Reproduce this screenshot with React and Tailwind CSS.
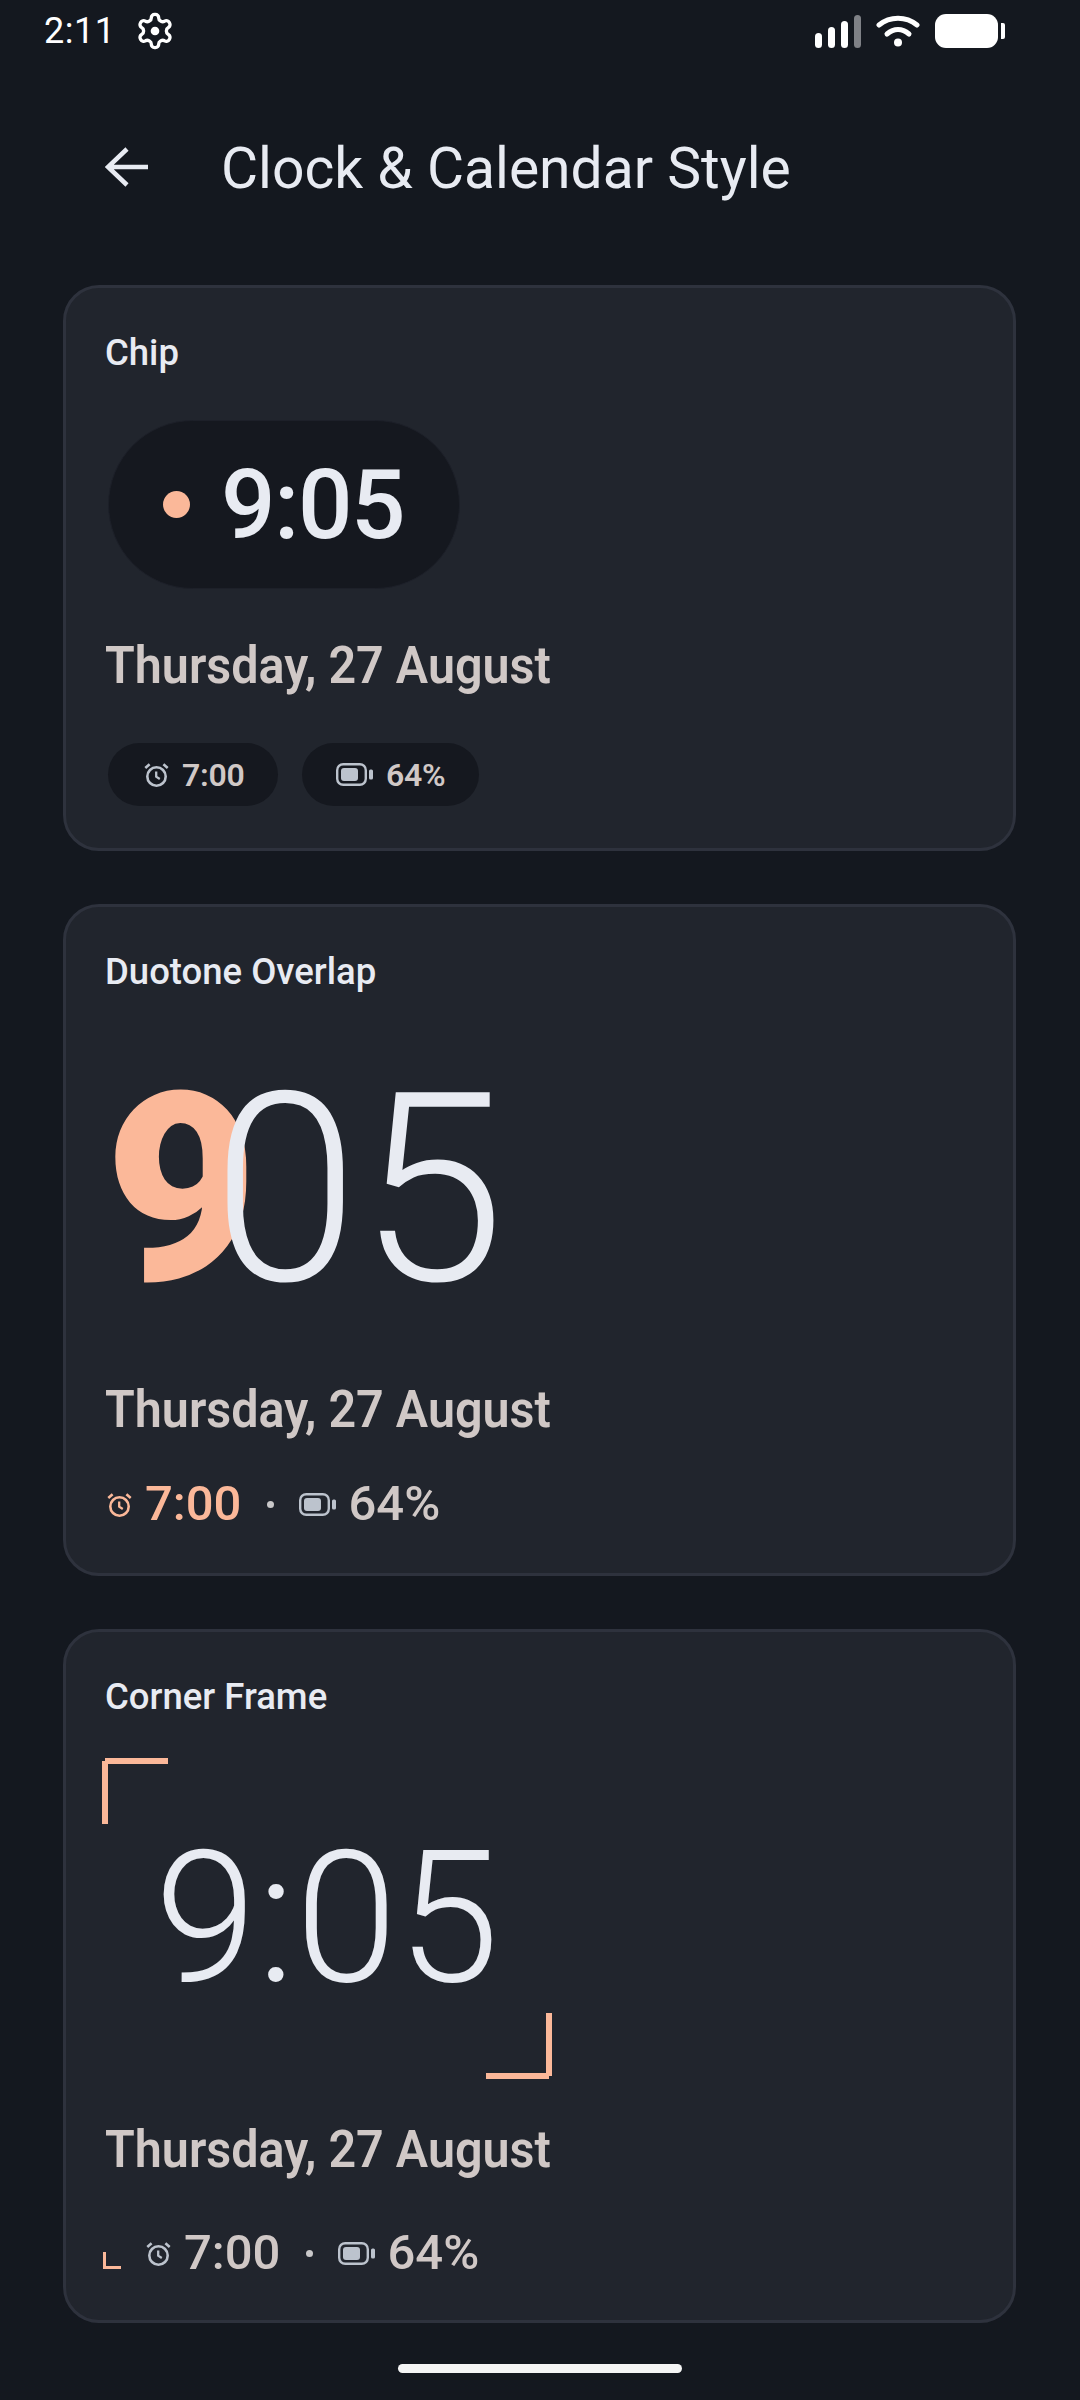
const AlarmIcon = ({ color = '#bcc3cd', className = '' }) => (
  <svg viewBox="0 0 25 25" width="25" height="25" fill="none" stroke={color} className={className}>
    <circle cx="12.5" cy="14.5" r="9.2" strokeWidth="2.6" />
    <path d="M12.2 9.5v5.2l3.6 2.2" strokeWidth="2.3" />
    <path d="M1.3 6 5.6 2.2M23.7 6 19.4 2.2" strokeWidth="2.6" />
  </svg>
);

const BatteryIcon = ({ className = '' }) => (
  <svg viewBox="0 0 37 23" width="37" height="23" className={`shrink-0 ${className}`}>
    <rect x="1.2" y="1.2" width="28.6" height="20.6" rx="6" fill="none" stroke="#bcc3cd" strokeWidth="2.4" />
    <rect x="5" y="5" width="17" height="13" rx="3" fill="#bcc3cd" />
    <rect x="33" y="6.5" width="4" height="10" rx="1.5" fill="#bcc3cd" />
  </svg>
);

const StatusBar = () => (
  <div className="h-[62px] pl-[44px] pr-[75px] flex items-center justify-between text-white">
    <div className="flex items-center">
      <span className="text-[36px] leading-[62px] tracking-[0.5px]">2:11</span>
      <svg viewBox="0 0 24 24" width="40" height="40" fill="none" stroke="white" strokeWidth="2" strokeLinejoin="round" className="ml-[20px]">
        <path d="M12.22 2h-.44a2 2 0 0 0-2 2v.18a2 2 0 0 1-1 1.73l-.43.25a2 2 0 0 1-2 0l-.15-.08a2 2 0 0 0-2.73.73l-.22.38a2 2 0 0 0 .73 2.73l.15.1a2 2 0 0 1 1 1.72v.51a2 2 0 0 1-1 1.74l-.15.09a2 2 0 0 0-.73 2.73l.22.38a2 2 0 0 0 2.73.73l.15-.08a2 2 0 0 1 2 0l.43.25a2 2 0 0 1 1 1.73V20a2 2 0 0 0 2 2h.44a2 2 0 0 0 2-2v-.18a2 2 0 0 1 1-1.73l.43-.25a2 2 0 0 1 2 0l.15.08a2 2 0 0 0 2.73-.73l.22-.39a2 2 0 0 0-.73-2.73l-.15-.08a2 2 0 0 1-1-1.74v-.5a2 2 0 0 1 1-1.74l.15-.09a2 2 0 0 0 .73-2.73l-.22-.38a2 2 0 0 0-2.73-.73l-.15.08a2 2 0 0 1-2 0l-.43-.25a2 2 0 0 1-1-1.73V4a2 2 0 0 0-2-2z" />
        <circle cx="12" cy="12" r="2.6" fill="white" stroke="none" />
      </svg>
    </div>
    <div className="flex items-center">
      <svg viewBox="0 0 46 33" width="46" height="33" className="mt-[1px]">
        <rect x="0" y="18" width="7" height="15" rx="3.5" fill="white" />
        <rect x="13" y="12" width="7" height="21" rx="3.5" fill="white" />
        <rect x="26" y="6" width="7" height="27" rx="3.5" fill="white" />
        <rect x="39" y="0" width="7" height="33" rx="3.5" fill="#7f8186" />
      </svg>
      <svg viewBox="0 0 44 32" width="44" height="32" fill="none" stroke="white" strokeWidth="5" strokeLinecap="round" className="ml-[15px]">
        <path d="M3 10C14 1 30 1 41 10" />
        <path d="M11 19C18 13 26 13 33 19" />
        <circle cx="22" cy="27.5" r="4" fill="white" stroke="none" />
      </svg>
      <div className="ml-[15px] w-[63px] h-[34px] bg-white rounded-[11px]" />
      <div className="ml-[3px] w-[4px] h-[16px] bg-white rounded-r-[2px]" />
    </div>
  </div>
);

const Header = () => (
  <div className="h-[210px] flex items-center pl-[105px]">
    <svg viewBox="0 0 44 40" width="44" height="40" fill="none" stroke="#e8ebf2" strokeWidth="4.5">
      <path d="M22 2 3 20l19 18M3 20h40" />
    </svg>
    <h1 className="ml-[72px] mt-[3px] text-[57px] leading-[70px] font-normal text-[#e8ebf2]">Clock &amp; Calendar Style</h1>
  </div>
);

const CardTitle = ({ children }) => (
  <div className="text-[36.5px] leading-[58px] font-[470] text-[#e8ebf2]">{children}</div>
);

const DateLine = ({ className = '' }) => (
  <div className={`text-[52px] leading-[72px] font-[590] scale-x-[0.932] origin-left text-[#d0c8c6] whitespace-nowrap ${className}`}>
    Thursday, 27 August
  </div>
);

const Dot = ({ className = '' }) => <div className={`w-[7px] h-[7px] rounded-full bg-[#c9c8c9] ${className}`} />;

const ChipCard = () => (
  <section className="h-[566px] rounded-[36px] border-[3px] border-[#2e323d] bg-[#21252d] px-[39px] pt-[36px]">
    <CardTitle>Chip</CardTitle>
    <div className="mt-[38px] ml-[3px] w-[352px] h-[169px] rounded-full bg-[#15181f] border border-[#1d2029] flex items-center pl-[54px]">
      <div className="w-[27px] h-[27px] rounded-full bg-[#fbb899]" />
      <span className="ml-[31px] text-[96px] leading-none font-[550] tracking-[-1.5px] text-[#e8ebf2]">9:05</span>
    </div>
    <DateLine className="mt-[41px]" />
    <div className="mt-[41px] ml-[3px] flex gap-[24px]">
      <div className="w-[170px] h-[63px] rounded-full bg-[#15181f] flex items-center pl-[36px]">
        <AlarmIcon />
        <span className="ml-[13px] text-[32px] font-[570] tracking-[-0.3px] text-[#d0c8c6]">7:00</span>
      </div>
      <div className="w-[177px] h-[63px] rounded-full bg-[#15181f] flex items-center pl-[34px]">
        <BatteryIcon />
        <span className="ml-[13px] text-[32px] font-[570] tracking-[-0.3px] text-[#d0c8c6]">64%</span>
      </div>
    </div>
  </section>
);

const DuotoneCard = () => (
  <section className="h-[672px] rounded-[36px] border-[3px] border-[#2e323d] bg-[#21252d] px-[39px] pt-[36px]">
    <CardTitle>Duotone Overlap</CardTitle>
    <div className="mt-[57px] h-[264px] flex text-[264px] leading-[264px]">
      <span className="font-black text-[#fbb899]">9</span>
      <span className="font-[350] text-[#e8ebf2] -ml-[46px]">05</span>
    </div>
    <DateLine className="mt-[52px]" />
    <div className="mt-[28px] h-[60px] flex items-center text-[49px] font-[520]">
      <AlarmIcon color="#fbb899" className="ml-[2px]" />
      <span className="ml-[13px] text-[#fbb899]">7:00</span>
      <Dot className="ml-[26px]" />
      <BatteryIcon className="ml-[25px]" />
      <span className="ml-[12px] text-[#d0c8c6]">64%</span>
    </div>
  </section>
);

const CornerCard = () => (
  <section className="h-[694px] rounded-[36px] border-[3px] border-[#2e323d] bg-[#21252d] px-[39px] pt-[36px]">
    <CardTitle>Corner Frame</CardTitle>
    <div className="relative mt-[32px] -ml-[3px] w-[450px] h-[321px] flex items-center justify-center">
      <div className="absolute left-[3px] top-0 w-[63px] h-[6px] bg-[#fbb899]" />
      <div className="absolute left-0 top-[3px] w-[6px] h-[63px] bg-[#fbb899]" />
      <span className="-mt-[2px] text-[184px] leading-none font-[350] text-[#e8ebf2]">9:05</span>
      <div className="absolute right-0 bottom-[3px] w-[6px] h-[63px] bg-[#fbb899]" />
      <div className="absolute right-[3px] bottom-0 w-[63px] h-[6px] bg-[#fbb899]" />
    </div>
    <DateLine className="mt-[35px]" />
    <div className="mt-[37px] h-[60px] flex items-center text-[49px] font-[520] text-[#d0c8c6]">
      <div className="ml-[-2px] mt-[14px] w-[18px] h-[17px] border-l-[3px] border-b-[3px] border-[#fbb899]" />
      <AlarmIcon className="ml-[25px]" />
      <span className="ml-[13px]">7:00</span>
      <Dot className="ml-[26px]" />
      <BatteryIcon className="ml-[25px]" />
      <span className="ml-[12px]">64%</span>
    </div>
  </section>
);

export default function App() {
  return (
    <div className="w-[1080px] h-[2400px] overflow-hidden bg-[#14181f] font-['Roboto',sans-serif]">
      <StatusBar />
      <Header />
      <main className="mt-[13px] mx-[63px] w-[953px] flex flex-col gap-[53px]">
        <ChipCard />
        <DuotoneCard />
        <CornerCard />
      </main>
      <div className="mt-[41px] mx-auto w-[284px] h-[9px] rounded-full bg-[#f5f5f5]" />
    </div>
  );
}
